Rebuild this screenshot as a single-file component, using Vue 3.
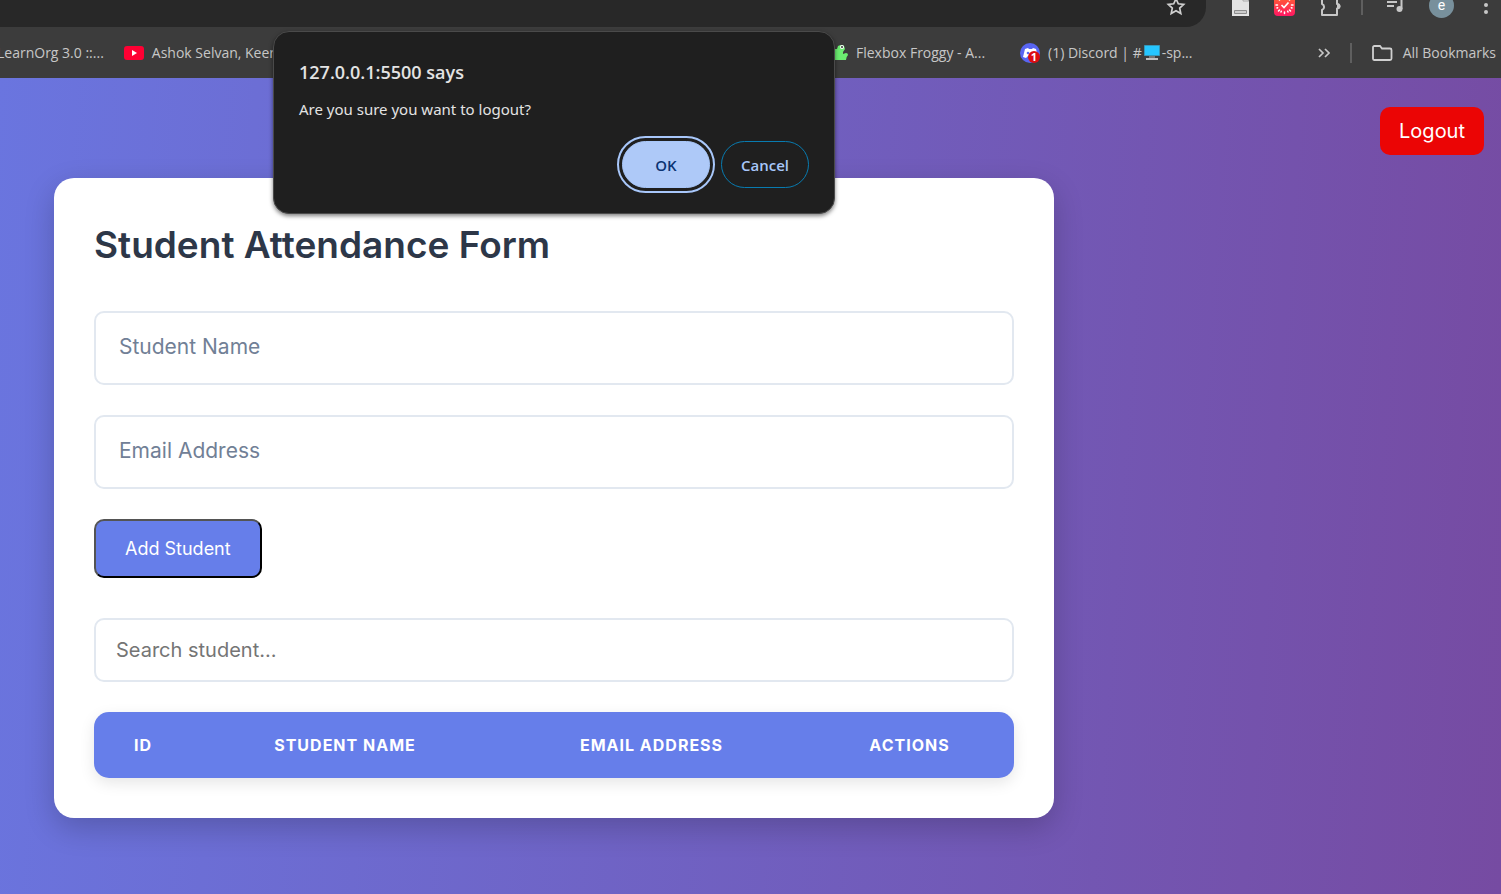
<script setup>
import { ref } from 'vue'

const name = ref('')
const email = ref('')
const search = ref('')
const columns = ['ID', 'Student Name', 'Email Address', 'Actions']
</script>

<template>
  <div class="screen">
    <header class="chrome">
      <div class="toolbar">
        <div class="omnibox">
          <button class="icon-btn" aria-label="Bookmark this tab">
            <svg width="20" height="20" viewBox="0 0 20 20"><path d="M10 2.8l2.300 5 5.400.6-4 3.700 1.100 5.400-4.800-2.700-4.800 2.700 1.100-5.400-4-3.700 5.400-.6z" fill="none" stroke="#d0d0d0" stroke-width="1.700" /></svg>
          </button>
        </div>
        <div class="tools">
          <div class="group">
            <button class="icon-btn" aria-label="Document extension">
              <svg width="18" height="22" viewBox="0 0 18 22"><path d="M0 0h11l6 7v15H0z" fill="#e3e3e3" /><path d="M11 0v7h6" fill="none" stroke="#aaa" /><path d="M2.500 16.500h12v3h-12z" fill="#ccc" stroke="#8c8c8c" /></svg>
            </button>
            <button class="icon-btn" aria-label="Clock extension">
              <svg width="21" height="22" viewBox="0 0 21 22">
                <defs><linearGradient id="clock" x1="0" y1="0" x2="0" y2="1"><stop offset="0" stop-color="#ff6a2b" /><stop offset="1" stop-color="#ff1763" /></linearGradient></defs>
                <rect width="21" height="22" rx="4" fill="url(#clock)" />
                <g stroke="#fff" stroke-width="1.500" stroke-linecap="round">
                  <path d="M10.500 2.500v1.500M10.500 18v1.500M2 11h1.500M17.500 11H19M4.500 5l1 1M16.500 5l-1 1M4.500 17l1-1M16.500 17l-1-1M7 18l.3-.7M14 18l-.3-.7M3 14l.7-.3M18 14l-.7-.3" />
                </g>
                <path d="M7.500 11l2.500 2.500 4.500-5" fill="none" stroke="#fff" stroke-width="1.700" />
              </svg>
            </button>
            <button class="icon-btn" aria-label="Extensions">
              <svg width="22" height="22" viewBox="0 0 22 22"><path d="M3 4h4V3a2.500 2.500 0 0 1 5 0v1h6v6a2 2 0 0 1 0 4.500V21H3v-5a3.200 3.200 0 0 0 0-6z" fill="none" stroke="#c7c7c7" stroke-width="2" stroke-linejoin="round" /><path d="M18 9.500q3.500 0 3.500 2.700T18 15z" fill="#c7c7c7" /></svg>
            </button>
          </div>
          <div class="group">
            <span class="rule"></span>
            <button class="icon-btn" aria-label="Media controls">
              <svg width="18" height="16" viewBox="0 0 18 16"><path d="M0 1h10M0 5h10M0 9h7" stroke="#c7c7c7" stroke-width="2" /><path d="M14.500 12V2H17" fill="none" stroke="#c7c7c7" stroke-width="2" /><circle cx="12.500" cy="12" r="3" fill="#c7c7c7" /></svg>
            </button>
            <button class="avatar" aria-label="Profile e">e</button>
            <button class="icon-btn menu" aria-label="Menu">
              <svg width="4" height="18" viewBox="0 0 4 18"><circle cx="2" cy="2" r="2" fill="#c7c7c7" /><circle cx="2" cy="9" r="2" fill="#c7c7c7" /><circle cx="2" cy="16" r="2" fill="#c7c7c7" /></svg>
            </button>
          </div>
        </div>
      </div>
      <nav class="bookmarks" aria-label="Bookmarks">
        <a href="#" class="mark first">LearnOrg 3.0 ::...</a>
        <a href="#" class="mark youtube">
          <svg width="20" height="14" viewBox="0 0 20 14"><rect width="20" height="14" rx="3" fill="#ff0033" /><path d="M8 4l5 3-5 3z" fill="#fff" /></svg>
          Ashok Selvan, Keerthi
        </a>
        <a href="#" class="mark froggy">
          <svg width="20" height="20" viewBox="0 0 20 20"><path d="M3 17V8l4-2h2l1-3q4-2 6 0l1 3-2 3v2l3-1q2 0 2 2-2 2-2 5z" fill="#6bec70" /><circle cx="14" cy="4" r="2" fill="#fff" /><circle cx="14" cy="4" r="1" fill="#333" /></svg>
          Flexbox Froggy - A...
        </a>
        <a href="#" class="mark discord">
          <svg width="20" height="20" viewBox="0 0 20 20"><circle cx="10" cy="10" r="10" fill="#5865f2" /><path d="M5 6l3-1 1 1h3l1-1 3 1 2 8-3 1-1-2H8l-2 2-3-1z" fill="#fff" /><circle cx="8" cy="10" r="1.300" fill="#5865f2" /><circle cx="14" cy="14" r="6" fill="#dc0d12" /><text x="14" y="18" text-anchor="middle" class="badge">1</text></svg>
          <span class="tight">(1) Discord | #<svg class="monitor" width="16" height="16" viewBox="0 0 16 16"><path d="M.5.5h15v10H.5z" fill="#26c6ff" stroke="#3597b8" /><path d="M5 11h6v2H5z" fill="#777" /><path d="M2 13h12v2H2z" fill="#c0c0c0" /></svg>-sp...</span>
        </a>
        <div class="mark-end">
          <button class="icon-btn" aria-label="More bookmarks">
            <svg width="12" height="10" viewBox="0 0 12 10"><path d="M1 1l4 4-4 4M7 1l4 4-4 4" fill="none" stroke="#c7c7c7" stroke-width="1.700" /></svg>
          </button>
          <span class="rule"></span>
          <a href="#" class="mark all">
            <svg width="21" height="16" viewBox="0 0 21 16"><path d="M2.500 1H8l2 2.500h8q1.500 0 1.500 1.500v8.500q0 1.500-1.500 1.500h-16Q1 15 1 13.500v-11Q1 1 2.500 1z" fill="none" stroke="#d0d0d0" stroke-width="1.800" /></svg>
            All Bookmarks
          </a>
        </div>
      </nav>
    </header>

    <main class="page">
      <div class="top"><button class="logout">Logout</button></div>
      <section class="card">
        <h1>Student Attendance Form</h1>
        <form @submit.prevent>
          <input v-model="name" class="field" type="text" placeholder="Student Name" aria-label="Student Name" />
          <input v-model="email" class="field" type="email" placeholder="Email Address" aria-label="Email Address" />
          <button class="add" type="submit">Add Student</button>
        </form>
        <input v-model="search" class="field search" type="text" placeholder="Search student..." aria-label="Search student" />
        <table>
          <thead>
            <tr><th v-for="c in columns" :key="c" scope="col">{{ c }}</th></tr>
          </thead>
        </table>
      </section>
    </main>

    <div class="dialog" role="dialog" aria-labelledby="dialog-title">
      <h2 id="dialog-title">127.0.0.1:5500 says</h2>
      <p>Are you sure you want to logout?</p>
      <div class="choices">
        <button class="ok">OK</button>
        <button class="cancel">Cancel</button>
      </div>
    </div>
  </div>
</template>

<style>
body {
  margin: 0;
}
</style>

<style scoped>
* {
  box-sizing: border-box;
}
.screen {
  position: relative;
  min-height: 100vh;
  display: flex;
  flex-direction: column;
  overflow: hidden;
  font-family: Inter, "Open Sans", sans-serif;
}
button {
  font-family: inherit;
  cursor: pointer;
}
.chrome {
  background: #3c3c3c;
  color: #c7c7c7;
  font-family: "Open Sans", "Noto Sans", sans-serif;
}
.toolbar {
  display: flex;
  justify-content: space-between;
  height: 27px;
}
.omnibox {
  flex: 0 1 1206px;
  display: flex;
  justify-content: flex-end;
  align-items: flex-start;
  padding-right: 20px;
  background: #282828;
  border-bottom-right-radius: 20px;
}
.omnibox svg {
  margin-top: -4px;
}
.icon-btn {
  display: flex;
  padding: 0;
  border: 0;
  background: none;
}
.tools {
  display: flex;
  align-items: center;
  gap: 20px;
  height: 10px;
  padding-right: 13px;
}
.group {
  display: flex;
  align-items: center;
  gap: 24px;
}
.menu {
  margin-left: 6px;
}
.rule {
  width: 2px;
  height: 20px;
  background: #5f5f5f;
}
.avatar {
  width: 25px;
  height: 25px;
  padding: 0;
  border: 0;
  border-radius: 50%;
  background: #78909c;
  color: #fff;
  font-family: Roboto, sans-serif;
  font-size: 14px;
  line-height: 14px;
}
.bookmarks {
  display: flex;
  align-items: center;
  height: 51px;
  padding-right: 5px;
  font-size: 14px;
}
.mark {
  display: flex;
  align-items: center;
  gap: 8px;
  color: inherit;
  text-decoration: none;
  white-space: nowrap;
}
.first {
  margin-left: -3px;
}
.youtube {
  margin-left: 20px;
}
.froggy {
  position: absolute;
  left: 828px;
}
.discord {
  position: absolute;
  left: 1020px;
}
.tight {
  display: flex;
  align-items: center;
}
.monitor {
  margin: 0 2px;
}
.badge {
  fill: #fff;
  font-size: 11px;
  font-weight: 700;
}
.mark-end {
  display: flex;
  align-items: center;
  gap: 20px;
  margin-left: auto;
}
.all {
  gap: 10px;
}
.page {
  flex: 1;
  padding: 29px 17px 76px 54px;
  background: linear-gradient(94deg, #6a75df, #764ba2);
}
.top {
  display: flex;
  justify-content: flex-end;
}
.logout {
  height: 48px;
  padding: 0 19px;
  border: 0;
  border-radius: 10px;
  background: #eb0505;
  color: #fff;
  font-size: 20px;
}
.card {
  max-width: 1000px;
  margin-top: 23px;
  padding: 40px;
  border-radius: 20px;
  background: #fff;
  box-shadow: 0 10px 30px rgba(0, 0, 0, 0.2);
}
h1 {
  margin: 0 0 39px;
  color: #2d3748;
  font-size: 37px;
  font-weight: 600;
  line-height: 54px;
}
form {
  display: flex;
  flex-direction: column;
  align-items: flex-start;
  gap: 30px;
}
.field {
  display: block;
  width: 100%;
  height: 74px;
  padding: 0 23px 4px;
  border: 2px solid #e2e8f0;
  border-radius: 10px;
  background: #fff;
  color: #2d3748;
  font-family: inherit;
  font-size: 21px;
}
.field::placeholder {
  color: #718096;
}
.add {
  height: 59px;
  padding: 0 29px;
  border: 2px outset #000;
  border-radius: 10px;
  background: #667eea;
  color: #fff;
  font-size: 18px;
}
.search {
  height: 64px;
  margin: 40px 0 30px;
  padding: 0 20px;
  font-size: 20px;
}
.search::placeholder {
  color: #757575;
}
table {
  width: 100%;
  border-collapse: collapse;
  border-radius: 15px;
  background: #667eea;
  box-shadow: 0 5px 15px rgba(0, 0, 0, 0.1);
  color: #fff;
}
th {
  height: 66px;
  padding: 0 20px;
  font-size: 16px;
  font-weight: 700;
  letter-spacing: 1px;
  text-align: center;
  text-transform: uppercase;
}
th:nth-child(1) {
  width: 98px;
}
th:nth-child(2) {
  width: 306px;
}
th:nth-child(3) {
  width: 307px;
}
.dialog {
  position: absolute;
  top: 31px;
  left: 273px;
  width: 562px;
  padding: 25px;
  border: 1px solid #4a4a4a;
  border-radius: 16px;
  background: #1f1f1f;
  box-shadow: 0 2px 4px rgba(0, 0, 0, 0.5);
  color: #e3e3e3;
  font-family: "Open Sans", "Noto Sans", sans-serif;
}
h2 {
  margin: 0;
  font-size: 18px;
  font-weight: 600;
  line-height: 30px;
}
p {
  margin: 9px 0 19px;
  font-family: "Noto Sans", "Open Sans", sans-serif;
  font-size: 15px;
  line-height: 26px;
}
.choices {
  display: flex;
  justify-content: flex-end;
  gap: 11px;
}
.choices button {
  width: 88px;
  height: 47px;
  padding: 0;
  border: 1px solid #087bb0;
  border-radius: 24px;
  background: none;
  color: #a8c7fa;
  font-size: 15px;
  font-weight: 600;
}
.choices .ok {
  border-color: #a8c7fa;
  background: #aec9f8;
  color: #0b3473;
  outline: 2px solid #a8c7fa;
  outline-offset: 3px;
}
</style>
